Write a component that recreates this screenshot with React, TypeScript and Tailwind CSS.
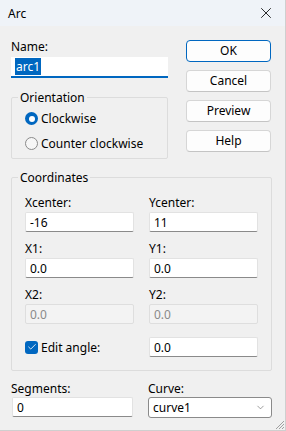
import React from 'react';
import { X, Check, ChevronDown } from 'lucide-react';

const font = { fontFamily: '"Noto Sans", "Liberation Sans", sans-serif' };

const TextBox: React.FC<{ value: string; disabled?: boolean; className?: string }> = ({ value, disabled, className = '' }) => (
  <div
    className={`h-[20px] flex items-center px-[4px] rounded-[2px] border ${
      disabled
        ? 'bg-[#f3f3f3] border-[#dedede] text-[#8a8a8a]'
        : 'bg-white border-[#e2e2e2] border-b-[#8a8a8a] text-black'
    } ${className}`}
  >
    {value}
  </div>
);

const Button: React.FC<{ label: string; primary?: boolean }> = ({ label, primary }) => (
  <button
    className={`h-[22px] w-full rounded-[4px] bg-[#fdfdfd] text-black leading-none ${
      primary ? 'border border-[#0067c0]' : 'border border-[#d6d6d6] border-b-[#c4c4c4]'
    }`}
  >
    {label}
  </button>
);

const Radio: React.FC<{ label: string; checked?: boolean }> = ({ label, checked }) => (
  <div className="flex items-center gap-[3px] h-[15px]">
    {checked ? (
      <span className="w-[13px] h-[13px] rounded-full bg-[#0067c0] flex items-center justify-center">
        <span className="w-[6px] h-[6px] rounded-full bg-white" />
      </span>
    ) : (
      <span className="w-[13px] h-[13px] rounded-full border border-[#8a8a8a] bg-[#f6f6f6]" />
    )}
    <span>{label}</span>
  </div>
);

export default function App() {
  return (
    <div
      className="w-[286px] h-[431px] bg-[#f0f0f0] text-[12px] leading-[15px] text-black flex flex-col border-r border-b border-[#cfcfcf] overflow-hidden"
      style={font}
    >
      {/* Title bar */}
      <div className="h-[26px] bg-[#eff3f8] flex items-center justify-between pl-[8px] pr-[10px] shrink-0">
        <span>Arc</span>
        <X size={18} strokeWidth={1.1} />
      </div>

      <div className="px-[11px] flex flex-col">
        <div className="flex">
          {/* Left column */}
          <div className="w-[157px] flex flex-col">
            <div className="mt-[13px]">Name:</div>
            <div className="mt-[3px] h-[21px] bg-white border-b-2 border-[#0067c0] flex items-center pl-[4px]">
              <span className="bg-[#0067c0] text-white px-[1px] leading-[17px]">arc1</span>
            </div>

            <fieldset className="mt-[12px] h-[69px] border border-[#dcdcdc] rounded-[2px]">
              <legend className="ml-[6px] px-[2px]">Orientation</legend>
              <div className="flex flex-col gap-[10px] mt-[6px] pl-[13px]">
                <Radio label="Clockwise" checked />
                <Radio label="Counter clockwise" />
              </div>
            </fieldset>
          </div>

          {/* Buttons */}
          <div className="ml-[18px] w-[85px] mt-[14px] flex flex-col gap-[8px]">
            <Button label="OK" primary />
            <Button label="Cancel" />
            <Button label="Preview" />
            <Button label="Help" />
          </div>
        </div>

        <fieldset className="mt-[11px] w-[261px] h-[201px] border border-[#dcdcdc] rounded-[2px]">
          <legend className="ml-[6px] px-[2px]">Coordinates</legend>
          <div className="grid grid-cols-2 gap-x-[15px] pt-[10px] px-[13px]">
            <div className="flex flex-col">
              <div>Xcenter:</div>
              <TextBox value="-16" className="mt-[2px]" />
            </div>
            <div className="flex flex-col">
              <div>Ycenter:</div>
              <TextBox value="11" className="mt-[2px]" />
            </div>

            <div className="flex flex-col mt-[9px]">
              <div>X1:</div>
              <TextBox value="0.0" className="mt-[2px]" />
            </div>
            <div className="flex flex-col mt-[9px]">
              <div>Y1:</div>
              <TextBox value="0.0" className="mt-[2px]" />
            </div>

            <div className="flex flex-col mt-[9px]">
              <div>X2:</div>
              <TextBox value="0.0" disabled className="mt-[2px]" />
            </div>
            <div className="flex flex-col mt-[9px]">
              <div>Y2:</div>
              <TextBox value="0.0" disabled className="mt-[2px]" />
            </div>

            <div className="mt-[13px] flex items-center gap-[3px]">
              <span className="w-[13px] h-[13px] rounded-[3px] bg-[#0067c0] flex items-center justify-center">
                <Check size={10} strokeWidth={2} color="white" />
              </span>
              <span>Edit angle:</span>
            </div>
            <TextBox value="0.0" className="mt-[13px]" />
          </div>
        </fieldset>

        {/* Bottom row */}
        <div className="flex mt-[10px]">
          <div className="w-[122px] flex flex-col">
            <div>Segments:</div>
            <TextBox value="0" className="mt-[1px] ml-[1px]" />
          </div>
          <div className="ml-[15px] w-[124px] flex flex-col">
            <div>Curve:</div>
            <div className="mt-[1px] h-[21px] bg-white border border-[#8a8a8a] rounded-[3px] flex items-center justify-between pl-[4px] pr-[5px]">
              <span>curve1</span>
              <ChevronDown size={11} strokeWidth={1.3} color="#5d5d5d" />
            </div>
          </div>
        </div>
      </div>

      {/* Resize grip */}
      <div className="mt-auto flex justify-end">
        <svg width="11" height="11" viewBox="0 0 11 11">
          <path d="M10 2 L2 10 M10 5 L5 10 M10 8 L8 10" stroke="#a0a0a0" strokeWidth="1" />
        </svg>
      </div>
    </div>
  );
}
